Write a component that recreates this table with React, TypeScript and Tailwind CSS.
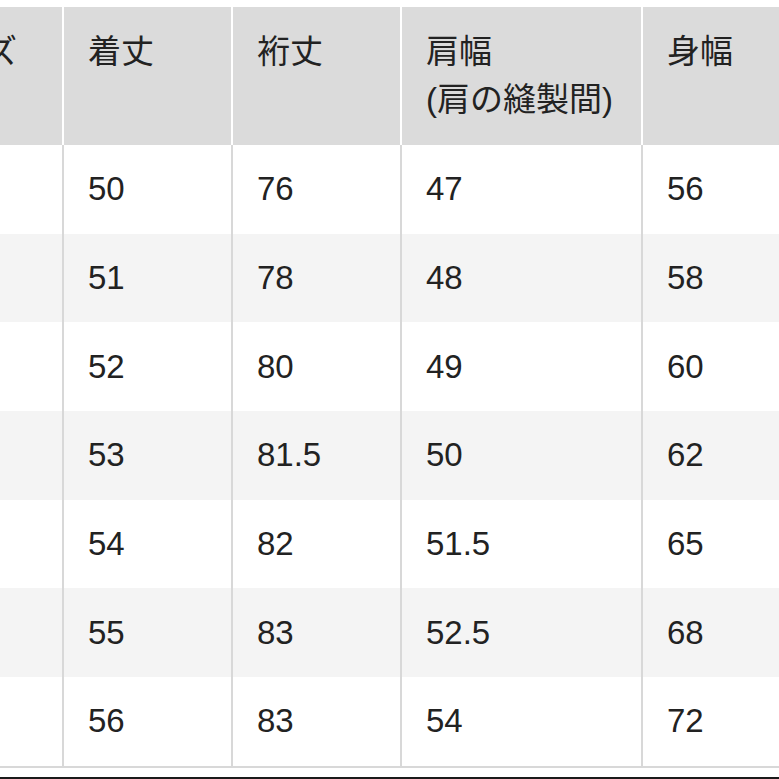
import React from "react";

const rows: string[][] = [
  ["50", "76", "47", "56"],
  ["51", "78", "48", "58"],
  ["52", "80", "49", "60"],
  ["53", "81.5", "50", "62"],
  ["54", "82", "51.5", "65"],
  ["55", "83", "52.5", "68"],
  ["56", "83", "54", "72"],
];

const widths = ["w-[169px]", "w-[169px]", "w-[241px]", "w-[200px]"];

export default function App() {
  return (
    <div
      className="w-[779px] h-[779px] overflow-hidden bg-white text-[#222222]"
      style={{ fontFamily: '"Liberation Sans", "Noto Sans CJK JP", sans-serif' }}
    >
      <div className="-ml-[107px] pt-[7px] text-[33px] leading-[48px]">
        <div className="flex h-[138px]">
          <div className="w-[171px] shrink-0 bg-[#dbdbdb] border-r-2 border-white pt-[21px] flex justify-end pr-[45px]">
            サイズ
          </div>
          <div className={`${widths[0]} shrink-0 bg-[#dbdbdb] border-r-2 border-white pl-[24px] pt-[21px]`}>着丈</div>
          <div className={`${widths[1]} shrink-0 bg-[#dbdbdb] border-r-2 border-white pl-[24px] pt-[21px]`}>裄丈</div>
          <div className={`${widths[2]} shrink-0 bg-[#dbdbdb] border-r-2 border-white pl-[24px] pt-[21px]`}>
            <div>肩幅</div>
            <div>(肩の縫製間)</div>
          </div>
          <div className={`${widths[3]} shrink-0 bg-[#dbdbdb] pl-[24px] pt-[21px]`}>身幅</div>
        </div>
        {rows.map((r, i) => (
          <div key={i} className={`flex h-[88.7px] ${i % 2 === 1 ? "bg-[#f4f4f4]" : "bg-white"}`}>
            <div className="w-[171px] shrink-0 border-r-2 border-[#d8d8d8]" />
            {r.map((c, j) => (
              <div
                key={j}
                className={`${widths[j]} shrink-0 flex items-center pl-[24px] ${j < 3 ? "border-r-2 border-[#d8d8d8]" : ""}`}
              >
                {c}
              </div>
            ))}
          </div>
        ))}
        <div className="h-[2px] bg-[#d8d8d8]" />
        <div className="h-[9px] bg-white" />
        <div className="h-[4px] bg-[#1a1a1a]" />
      </div>
    </div>
  );
}
